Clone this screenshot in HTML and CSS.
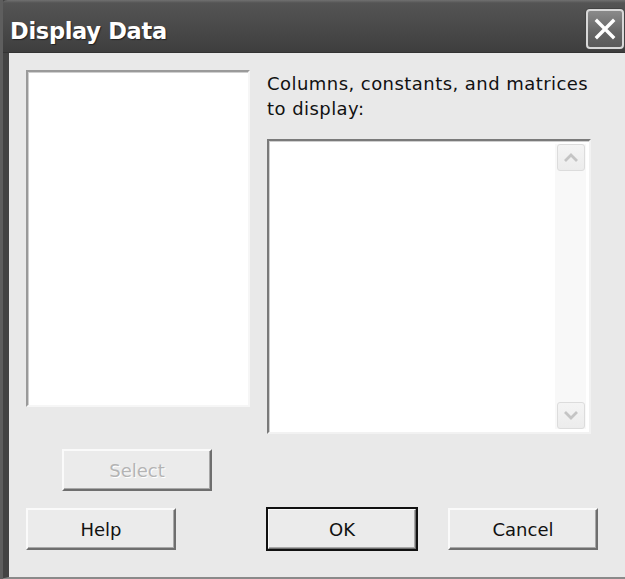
FILE: index.html
```html
<!DOCTYPE html>
<html>
<head>
<meta charset="utf-8">
<title>Display Data</title>
<link rel="stylesheet" href="styles.css">
</head>
<body>
<div class="window">
  <div class="titlebar">
    <span class="title">Display Data</span>
    <span class="close">
      <svg width="26" height="26" viewBox="0 0 26 26"><path d="M5 5 L21 21 M21 5 L5 21" stroke="#fff" stroke-width="3.4" stroke-linecap="square"/></svg>
    </span>
  </div>
  <div class="client">
    <div class="top-row">
      <div class="listbox source"></div>
      <div class="target">
        <div class="label">Columns, constants, and matrices to display:</div>
        <div class="listbox dest">
          <div class="scrollbar">
            <span class="sb-btn">
              <svg width="18" height="11" viewBox="0 0 18 11"><path d="M3 9 L9 3 L15 9" fill="none" stroke="#c4c4c4" stroke-width="2.8"/></svg>
            </span>
            <span class="sb-btn">
              <svg width="18" height="11" viewBox="0 0 18 11"><path d="M3 2 L9 8 L15 2" fill="none" stroke="#c4c4c4" stroke-width="2.8"/></svg>
            </span>
          </div>
        </div>
      </div>
    </div>
    <div class="select-row">
      <button class="btn disabled">Select</button>
    </div>
    <div class="button-row">
      <button class="btn">Help</button>
      <button class="btn default">OK</button>
      <button class="btn">Cancel</button>
    </div>
  </div>
</div>
</body>
</html>
```

FILE: styles.css
```css
html, body {
  margin: 0;
  padding: 0;
  background: #e8e8e8;
}

.window {
  width: 625px;
  height: 579px;
  box-sizing: border-box;
  display: flex;
  flex-direction: column;
  background: #e9e9e9;
  border-left: 9px solid #434343;
  border-bottom: 2px solid #8a8a8a;
  position: relative;
  font-family: "DejaVu Sans", Verdana, sans-serif;
}

/* lighter outer edge of the left frame */
.window::before {
  content: "";
  position: absolute;
  left: -9px;
  top: 0;
  bottom: -2px;
  width: 3px;
  background: #5e5e5e;
}

.titlebar {
  height: 53px;
  margin-left: -9px;
  padding: 0 1px 3px 10px;
  display: flex;
  align-items: flex-end;
  justify-content: space-between;
  background: linear-gradient(#707070 0, #545454 3px, #4a4a4a 50%, #3e3e3e 100%);
  border-top-left-radius: 8px;
  border-bottom: 1px solid #333;
  box-sizing: border-box;
}

.title {
  color: #fff;
  font-family: "DejaVu Sans", sans-serif;
  font-weight: bold;
  font-size: 22.5px;
  letter-spacing: -0.3px;
  text-shadow: 1px 1px 1px #222;
  margin-bottom: 5px;
}

.close {
  width: 38px;
  height: 40px;
  box-sizing: border-box;
  border: 2px solid #d8d8d8;
  border-radius: 4px;
  background: linear-gradient(#8a8a8a, #666 60%, #5a5a5a);
  display: flex;
  align-items: center;
  justify-content: center;
  box-shadow: 0 0 0 1px #444;
}

.client {
  flex: 1;
  padding: 17px 0 0 17px;
}

.top-row {
  display: flex;
  align-items: flex-start;
  gap: 17px;
}

.listbox {
  box-sizing: border-box;
  background: #fff;
  border-style: solid;
  border-width: 2px;
  border-color: #9a9a9a #f6f6f6 #f6f6f6 #9a9a9a;
  box-shadow: inset 1px 1px 0 #cfcfcf;
}

.source {
  width: 224px;
  height: 337px;
}

.target {
  display: flex;
  flex-direction: column;
}

.label {
  width: 335px;
  font-size: 18px;
  letter-spacing: 0.45px;
  line-height: 25px;
  color: #111;
  margin: 0 0 18px 0;
  padding-top: 1px;
}

.dest {
  width: 324px;
  height: 295px;
  display: flex;
  justify-content: flex-end;
  padding: 3px 3px 3px 0;
  border-color: #7a7a7a #f2f2f2 #f2f2f2 #7a7a7a;
}

.scrollbar {
  width: 31px;
  background: #f8f8f8;
  display: flex;
  flex-direction: column;
  justify-content: space-between;
  align-items: center;
}

.sb-btn {
  width: 28px;
  height: 27px;
  box-sizing: border-box;
  border: 1px solid #dcdcdc;
  border-radius: 3px;
  background: linear-gradient(#f4f4f4, #ececec);
  display: flex;
  align-items: center;
  justify-content: center;
}

.select-row {
  margin-top: 15px;
  padding-left: 36px;
}

.button-row {
  margin-top: 17px;
  display: flex;
}

.btn {
  width: 150px;
  height: 42px;
  box-sizing: border-box;
  font-family: "DejaVu Sans", Verdana, sans-serif;
  font-size: 18px;
  color: #111;
  background: #ebebeb;
  border-style: solid;
  border-width: 2px;
  border-color: #fafafa #6e6e6e #6e6e6e #fafafa;
  box-shadow: inset -1px -1px 0 #a8a8a8;
  padding: 0;
}

.btn.disabled {
  color: #b4b4b4;
  text-shadow: 1px 1px 0 #fff;
}

.btn.default {
  outline: 2px solid #111;
  outline-offset: -1px;
  margin-left: 91px;
}

.btn.default + .btn {
  margin-left: 31px;
}
```
